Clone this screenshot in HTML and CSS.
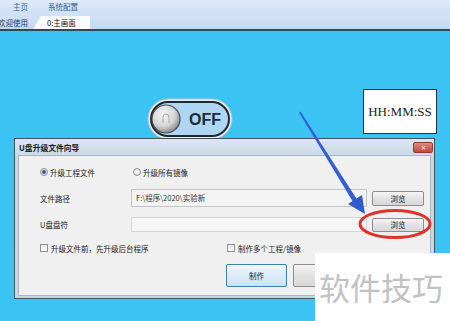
FILE: index.html
```html
<!DOCTYPE html>
<html lang="zh-CN">
<head>
  <meta charset="UTF-8">
  <title>主画面</title>
  <link rel="stylesheet" href="styles.css">
</head>
<body>

  <!-- Menu and tabs -->
  <div class="menubar">
    <span>主页</span>
    <span>系统配置</span>
  </div>
  <div class="tabbar">
    <div class="tab">欢迎使用</div>
    <div class="tab tab-active">0:主画面</div>
  </div>
  <div class="rule"></div>

  <!-- HMI screen -->
  <div class="screen">
    <div class="toggle">
      <svg width="86" height="42" viewBox="0 0 86 42">
        <defs>
          <radialGradient id="knob" cx="0.4" cy="0.35" r="0.7">
            <stop offset="0" stop-color="#f6f6f6"/>
            <stop offset="0.6" stop-color="#d4d4d4"/>
            <stop offset="1" stop-color="#7c7c7c"/>
          </radialGradient>
        </defs>
        <rect x="1" y="1" width="84" height="40" rx="20" fill="#e6edf1" stroke="#b8c4cc"/>
        <rect x="4" y="4" width="78" height="34" rx="17" fill="#aed6f2" stroke="#1d2833" stroke-width="2"/>
        <circle cx="19" cy="21" r="14" fill="url(#knob)" stroke="#4b4b4b" stroke-width="1.2"/>
        <path d="M16 25 V19 a3 3 0 0 1 6 0 V25" fill="none" stroke="#aaa" stroke-width="1"/>
        <text x="42" y="27" class="toggle-text">OFF</text>
      </svg>
    </div>

    <div class="clock">HH:MM:SS</div>

    <!-- Dialog window -->
    <div class="dialog">
      <div class="titlebar">
        <span class="title">U盘升级文件向导</span>
        <span class="close">✕</span>
      </div>
      <div class="dialog-body">
        <label class="opt"><span class="radio checked"></span>升级工程文件</label>
        <label class="opt opt-2"><span class="radio"></span>升级所有镜像</label>
        <span></span>

        <span class="label">文件路径</span>
        <div class="input">F:\程序\2020\实验新</div>
        <button class="btn btn-small">浏览</button>

        <span class="label">U盘盘符</span>
        <div class="input input-empty"></div>
        <button class="btn btn-small btn-u">浏览</button>

        <div class="checks">
          <label class="opt check-first"><span class="box"></span>升级文件前，先升级后台程序</label>
          <label class="opt"><span class="box"></span>制作多个工程/镜像</label>
        </div>

        <div class="actions">
          <button class="btn btn-default">制作</button>
          <button class="btn"></button>
        </div>
      </div>
    </div>

    <div class="watermark">软件技巧</div>
  </div>

  <!-- Annotation: arrow and circle -->
  <svg class="annot" width="450" height="321" viewBox="0 0 450 321">
    <polygon points="299,112.5 300.5,111.5 358,201 354,203.5" fill="#3160d2"/>
    <polygon points="365,214 362,195 348,204" fill="#2f5bcc"/>
    <ellipse cx="395" cy="224" rx="35" ry="13.5" fill="none" stroke="#e0322b" stroke-width="3"/>
  </svg>

</body>
</html>
```

FILE: styles.css
```css
body {
  margin: 0;
  width: 450px;
  height: 321px;
  overflow: hidden;
  position: relative;
  font-family: "Noto Sans CJK SC", "Noto Sans", sans-serif;
  background: #3bc3f3;
}

/* Menu bar */
.menubar {
  height: 13px;
  display: flex;
  gap: 20px;
  padding-left: 13px;
  background: linear-gradient(#dfeaf8, #cfe0f5);
  font-size: 7.5px;
  line-height: 13px;
  color: #3a5f96;
}

.tabbar {
  height: 16px;
  display: flex;
  align-items: flex-end;
  background: linear-gradient(#d3e3f6, #c4d8f0);
  font-size: 7.5px;
}

.tab {
  height: 13px;
  line-height: 13px;
  color: #253a55;
  margin-left: -2px;
  padding-right: 7px;
}

.tab-active {
  margin-left: -2px;
  width: 36px;
  padding-left: 14px;
  background: #fbfcfe;
  color: #111;
  clip-path: polygon(8px 0, 100% 0, 100% 100%, 0 100%);
}

.rule {
  height: 2px;
  background: #2c4b5a;
}

/* Screen */
.screen {
  position: relative;
  height: 290px;
  background: #3bc3f3;
}

.toggle {
  position: absolute;
  left: 147px;
  top: 67px;
  width: 86px;
  height: 42px;
}

.toggle svg {
  display: block;
}

.toggle-text {
  font-family: "Liberation Sans", Arial, sans-serif;
  font-weight: bold;
  font-size: 16px;
  fill: #1b2a38;
}

.clock {
  position: absolute;
  left: 363px;
  top: 58px;
  width: 74px;
  height: 45px;
  box-sizing: border-box;
  border: 1.5px solid #1d3646;
  background: #fff;
  display: flex;
  align-items: center;
  justify-content: center;
  font-family: "Liberation Serif", "DejaVu Serif", serif;
  font-size: 13px;
  color: #222;
}

/* Dialog */
.dialog {
  position: absolute;
  left: 14px;
  top: 107px;
  width: 421px;
  height: 161px;
  box-sizing: border-box;
  border: 1px solid #44525f;
  background: linear-gradient(#dbe6f1, #c9d7e5 20px, #cad8e6);
  padding: 0 3px 2px 3px;
  display: flex;
  flex-direction: column;
}

.titlebar {
  height: 16px;
  display: flex;
  align-items: center;
  justify-content: space-between;
  padding-left: 1px;
}

.title {
  font-size: 7.8px;
  font-weight: bold;
  color: #1a1a1a;
}

.close {
  width: 18px;
  height: 9px;
  margin-right: -2px;
  margin-top: 1px;
  border: 1px solid #8c3a33;
  border-radius: 2px;
  background: linear-gradient(#e08a7e, #c4483c);
  color: #fff;
  font-size: 6px;
  line-height: 9px;
  text-align: center;
}

.dialog-body {
  flex: 1;
  background: #f0f0f0;
  border: 1px solid #a7b6c6;
  padding: 9px 0 0 21px;
  display: grid;
  grid-template-columns: 86px 236px 52px;
  grid-template-rows: 14px 18px 15px 12px 23px;
  column-gap: 5px;
  row-gap: 10px;
  align-items: center;
  font-size: 7.5px;
  color: #222;
}

.opt {
  display: flex;
  align-items: center;
  gap: 2px;
  white-space: nowrap;
}

.opt-2 {
  margin-left: 2px;
}

.radio {
  width: 6px;
  height: 6px;
  border-radius: 50%;
  border: 1px solid #8e8f8f;
  background: radial-gradient(#ffffff, #dcdcdc);
  position: relative;
}

.radio.checked::after {
  content: "";
  position: absolute;
  left: 1px;
  top: 1px;
  width: 4px;
  height: 4px;
  border-radius: 50%;
  background: #2c5ea6;
}

.box {
  width: 6px;
  height: 6px;
  border: 1px solid #8e8f8f;
  background: linear-gradient(#e6e6e6, #fdfdfd);
  margin-right: 1px;
}

.label {
  color: #222;
}

.input {
  height: 18px;
  box-sizing: border-box;
  border: 1px solid #c5c5c5;
  background: #f3f3f3;
  padding-left: 4px;
  line-height: 16px;
  color: #333;
}

.input-empty {
  height: 15px;
  border-color: #d6d6d6;
  background: #f5f5f5;
}

.btn {
  font-family: inherit;
  font-size: 7.5px;
  color: #222;
  border: 1px solid #8c8c8c;
  border-radius: 2px;
  background: linear-gradient(#f5f5f5, #e2e2e2 50%, #d8d8d8);
  padding: 0;
  width: 61px;
  height: 23px;
}

.btn-small {
  width: 52px;
  height: 15px;
}

.btn-u {
  height: 14px;
}

.checks {
  grid-column: 1 / -1;
  display: flex;
}

.check-first {
  width: 187px;
}

.actions {
  grid-column: 1 / -1;
  display: flex;
  gap: 6px;
  padding-left: 186px;
}

.btn-default {
  border-color: #3c7fb1;
  background: linear-gradient(#eef6fc, #dcecf8 50%, #cde3f3);
}

/* Watermark */
.watermark {
  position: absolute;
  left: 315px;
  top: 222px;
  width: 135px;
  height: 68px;
  background: #fff;
  box-sizing: border-box;
  padding-left: 4px;
  font-size: 31px;
  line-height: 68px;
  color: #c2c2c2;
  white-space: nowrap;
}

.annot {
  position: absolute;
  left: 0;
  top: 0;
  pointer-events: none;
}
```
